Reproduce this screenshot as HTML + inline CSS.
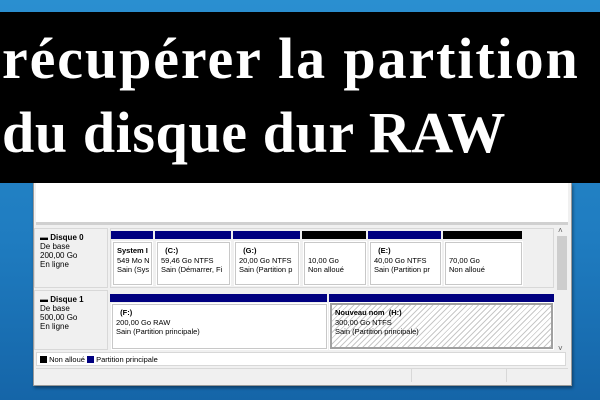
<!DOCTYPE html><html><head><meta charset="utf-8"><style>
*{margin:0;padding:0;box-sizing:border-box}
body{width:600px;height:400px;overflow:hidden;position:relative;background:linear-gradient(180deg,#2a8fd0 0%,#1f7cc0 60%,#1565a8 100%);font-family:"Liberation Sans",sans-serif;font-size:8px;color:#000}
.a{position:absolute}
.ban{left:0;top:12px;width:600px;height:171px;background:#000}
.t{color:#fff;font-family:"Liberation Serif",serif;font-weight:bold;font-size:58px;letter-spacing:0.6px;line-height:74px;white-space:nowrap;left:2px}
.win{left:33px;top:183px;width:539px;height:203px;background:#f0f0f0;border:1px solid #999;border-top:none;box-shadow:1px 2px 3px rgba(0,0,0,.4)}
.lab{background:#f0f0f0;border:1px solid #d8d8d8;padding:4px 0 0 5px;line-height:9px}
.bar{background:#000080;height:8px}
.bk{background:#000;height:8px}
.box{background:#fff;border:1px solid #c8c8c8;outline:1px solid #fff;padding:3px 3px;line-height:9.5px;white-space:nowrap;overflow:hidden;font-size:7.5px}
.hatch{background:repeating-linear-gradient(135deg,#fff 0 3px,#c8c8c8 3px 4px);border:2px solid #a0a0a0}
</style></head><body>
<div class="a ban"></div>
<div class="a t" style="top:22px;letter-spacing:1.9px">récupérer la partition</div>
<div class="a t" style="top:96px">du disque dur RAW</div>
<div class="a win"></div>
<div class="a" style="left:36px;top:183px;width:532px;height:39px;background:#fff"></div>
<div class="a" style="left:36px;top:222px;width:532px;height:3px;background:#d0d0d0"></div>
<div class="a lab" style="left:34px;top:228px;width:74px;height:60px"><b>▬ Disque 0</b><br>De base<br>200,00 Go<br>En ligne</div>
<div class="a" style="left:110px;top:228px;width:444px;height:60px;background:#f0f0f0;border:1px solid #d8d8d8"></div>
<div class="a bar" style="left:111px;top:231px;width:42px"></div>
<div class="a bar" style="left:155px;top:231px;width:76px"></div>
<div class="a bar" style="left:233px;top:231px;width:67px"></div>
<div class="a bk" style="left:302px;top:231px;width:64px"></div>
<div class="a bar" style="left:368px;top:231px;width:73px"></div>
<div class="a bk" style="left:443px;top:231px;width:79px"></div>
<div class="a box" style="left:113px;top:242px;width:39px;height:43px"><b>System I</b><br>549 Mo N<br>Sain (Sys</div>
<div class="a box" style="left:157px;top:242px;width:73px;height:43px">&nbsp;&nbsp;<b>(C:)</b><br>59,46 Go NTFS<br>Sain (Démarrer, Fi</div>
<div class="a box" style="left:235px;top:242px;width:64px;height:43px">&nbsp;&nbsp;<b>(G:)</b><br>20,00 Go NTFS<br>Sain (Partition p</div>
<div class="a box" style="left:304px;top:242px;width:62px;height:43px"><br>10,00 Go<br>Non alloué</div>
<div class="a box" style="left:370px;top:242px;width:71px;height:43px">&nbsp;&nbsp;<b>(E:)</b><br>40,00 Go NTFS<br>Sain (Partition pr</div>
<div class="a box" style="left:445px;top:242px;width:77px;height:43px"><br>70,00 Go<br>Non alloué</div>
<div class="a lab" style="left:34px;top:290px;width:74px;height:60px"><b>▬ Disque 1</b><br>De base<br>500,00 Go<br>En ligne</div>
<div class="a bar" style="left:110px;top:294px;width:217px"></div>
<div class="a bar" style="left:329px;top:294px;width:225px"></div>
<div class="a box" style="left:112px;top:304px;width:215px;height:45px">&nbsp;&nbsp;<b>(F:)</b><br>200,00 Go RAW<br>Sain (Partition principale)</div>
<div class="a box hatch" style="left:330px;top:303px;width:223px;height:46px"><b>Nouveau nom&nbsp; (H:)</b><br>300,00 Go NTFS<br>Sain (Partition principale)</div>
<div class="a" style="left:556px;top:228px;width:12px;height:124px;background:#f0f0f0"></div>
<div class="a" style="left:557px;top:236px;width:10px;height:54px;background:#cdcdcd"></div>
<div class="a" style="left:558px;top:226px;font-size:8px;color:#555">˄</div>
<div class="a" style="left:558px;top:344px;font-size:8px;color:#555">˅</div>
<div class="a" style="left:36px;top:352px;width:530px;height:14px;background:#fff;border:1px solid #d8d8d8;padding:2px 3px;font-size:7.5px;white-space:nowrap"><span style="display:inline-block;width:7px;height:7px;background:#000;vertical-align:-1px"></span> Non alloué <span style="display:inline-block;width:7px;height:7px;background:#000080;vertical-align:-1px"></span> Partition principale</div>
<div class="a" style="left:36px;top:368px;width:532px;height:15px;background:#f0f0f0;border-top:1px solid #d8d8d8"></div>
<div class="a" style="left:411px;top:369px;width:1px;height:13px;background:#d8d8d8"></div>
<div class="a" style="left:506px;top:369px;width:1px;height:13px;background:#d8d8d8"></div>
</body></html>
